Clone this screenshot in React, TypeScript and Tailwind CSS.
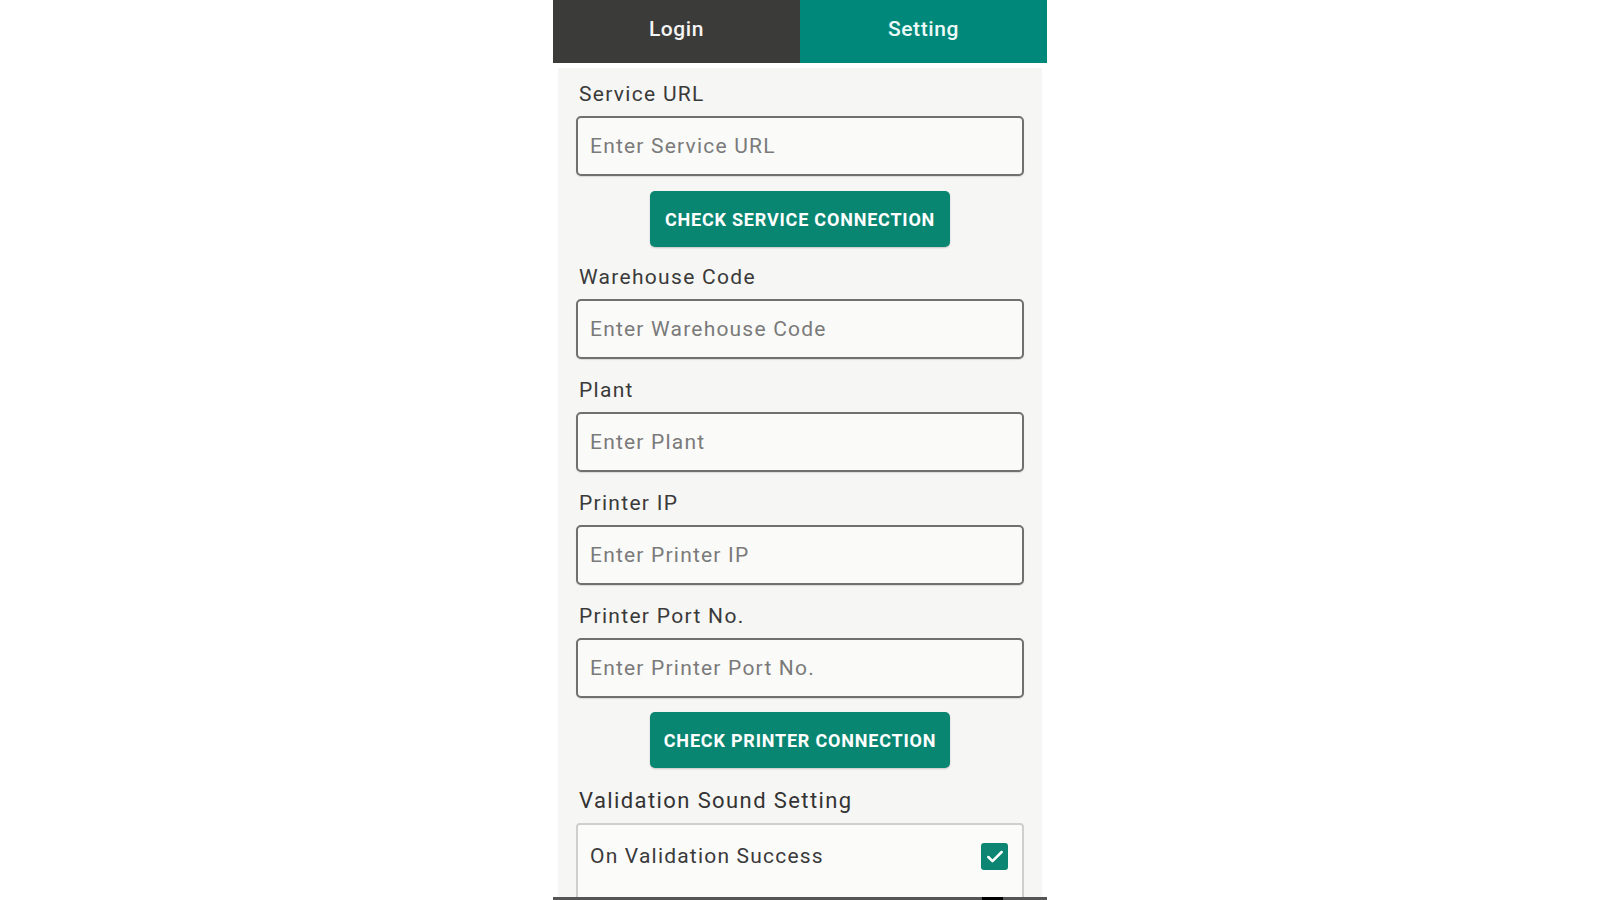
import { Check } from "lucide-react";

type FieldProps = {
  label: string;
  placeholder: string;
  className?: string;
};

function Field({ label, placeholder, className = "" }: FieldProps) {
  return (
    <div className={`flex flex-col ${className}`}>
      <label className="text-[21px] leading-[24px] tracking-[1.3px] text-[#3a3a3a] pl-[3px]">{label}</label>
      <input
        placeholder={placeholder}
        className="mt-[10px] h-[60px] w-full rounded-[5px] border-2 border-[#707070] bg-[#fafaf9] px-[12px] text-[21px] tracking-[1.2px] text-[#333] outline-none placeholder:text-[#7a7a7a] shadow-[0_1px_1px_rgba(0,0,0,0.12)]"
      />
    </div>
  );
}

function ActionButton({ children, className = "" }: { children: string; className?: string }) {
  return (
    <div className={`flex justify-center ${className}`}>
      <button
        type="button"
        className="h-[56px] w-[300px] rounded-[5px] bg-[#088672] text-white text-[18px] font-bold tracking-[0.8px] uppercase shadow-[0_1px_2px_rgba(0,0,0,0.2)]"
      >
        {children}
      </button>
    </div>
  );
}

export default function App() {
  return (
    <main className="min-h-screen bg-white flex justify-center font-['Roboto',sans-serif] antialiased">
      <div className="relative w-[494px] h-[900px] flex flex-col overflow-hidden">
        {/* tabs */}
        <div className="flex h-[63px] shrink-0">
          <div className="flex-1 bg-[#3b3b39] flex items-center justify-center pb-[3px] text-[#f4f4f4] text-[21px] font-medium tracking-[0.6px]">
            Login
          </div>
          <div className="flex-1 bg-[#00897b] flex items-center justify-center pb-[3px] text-[#eefaf7] text-[21px] font-medium tracking-[0.6px]">
            Setting
          </div>
        </div>

        <div className="mx-[5px] mt-[5px] flex-1 bg-[#f6f6f4] px-[18px] pt-[14px] flex flex-col">
          <Field label="Service URL" placeholder="Enter Service URL" />
          <ActionButton className="mt-[15px]">Check Service Connection</ActionButton>
          <Field className="mt-[18px]" label="Warehouse Code" placeholder="Enter Warehouse Code" />
          <Field className="mt-[19px]" label="Plant" placeholder="Enter Plant" />
          <Field className="mt-[19px]" label="Printer IP" placeholder="Enter Printer IP" />
          <Field className="mt-[19px]" label="Printer Port No." placeholder="Enter Printer Port No." />
          <ActionButton className="mt-[14px]">Check Printer Connection</ActionButton>

          <p className="mt-[21px] text-[22px] leading-[24px] tracking-[1.4px] text-[#333] pl-[3px]">Validation Sound Setting</p>
          <div className="mt-[10px] flex-1 rounded-t-[4px] border-2 border-b-0 border-[#cfcfcf] bg-[#fbfbfa]">
            <div className="flex items-center justify-between pl-[12px] pr-[14px] pt-[16px]">
              <span className="text-[21px] tracking-[1.2px] text-[#3a3a3a]">On Validation Success</span>
              <span className="w-[27px] h-[27px] rounded-[3px] bg-[#0c8672] flex items-center justify-center">
                <Check size={20} strokeWidth={3} className="text-white" />
              </span>
            </div>
          </div>
        </div>

        {/* bottom edge */}
        <div className="h-[3px] shrink-0 bg-[#555] relative">
          <div className="absolute left-[429px] top-0 h-[3px] w-[21px] bg-black" />
        </div>
      </div>
    </main>
  );
}
